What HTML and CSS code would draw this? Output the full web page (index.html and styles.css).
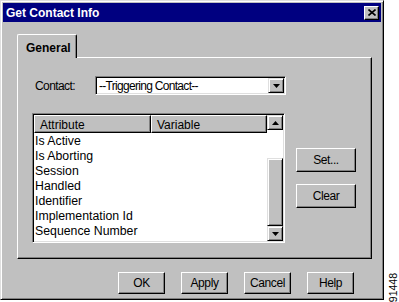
FILE: index.html
```html
<!DOCTYPE html>
<html lang="en">
<head>
    <meta charset="UTF-8">
    <meta name="viewport" content="width=device-width, initial-scale=1.0">
    <title>Get Contact Info</title>
    <link rel="stylesheet" href="styles.css">
</head>
<body>
    <div class="page">
        <div class="dialog">
            <div class="titlebar">
                <span class="title">Get Contact Info</span>
                <button class="close" aria-label="Close">
                    <svg width="8" height="7" viewBox="0 0 8 7">
                        <path d="M0.5 0.5 L7.5 6.5 M7.5 0.5 L0.5 6.5" stroke="#000" stroke-width="1.6" fill="none"/>
                    </svg>
                </button>
            </div>

            <div class="content">
                <div class="tabs">
                    <div class="tab">General</div>
                </div>

                <div class="panel">
                    <div class="contact-row">
                        <label class="label">Contact:</label>
                        <div class="combo">
                            <span class="combo-text">--Triggering Contact--</span>
                            <div class="arrow-btn">
                                <svg width="7" height="4" viewBox="0 0 7 4"><path d="M0 0 H7 L3.5 4 Z" fill="#000"/></svg>
                            </div>
                        </div>
                    </div>

                    <div class="list-row">
                        <div class="listview">
                            <div class="list-main">
                                <div class="list-head">
                                    <div class="col col-attr">Attribute</div>
                                    <div class="col col-var">Variable</div>
                                </div>
                                <ul class="items">
                                    <li>Is Active</li>
                                    <li>Is Aborting</li>
                                    <li>Session</li>
                                    <li>Handled</li>
                                    <li>Identifier</li>
                                    <li>Implementation Id</li>
                                    <li>Sequence Number</li>
                                </ul>
                            </div>
                            <div class="scrollbar">
                                <div class="arrow-btn">
                                    <svg width="7" height="4" viewBox="0 0 7 4"><path d="M0 4 H7 L3.5 0 Z" fill="#000"/></svg>
                                </div>
                                <div class="track">
                                    <div class="thumb"></div>
                                </div>
                                <div class="arrow-btn">
                                    <svg width="7" height="4" viewBox="0 0 7 4"><path d="M0 0 H7 L3.5 4 Z" fill="#000"/></svg>
                                </div>
                            </div>
                        </div>

                        <div class="side-buttons">
                            <button class="btn btn-side">Set...</button>
                            <button class="btn btn-side">Clear</button>
                        </div>
                    </div>
                </div>

                <div class="actions">
                    <button class="btn">OK</button>
                    <button class="btn">Apply</button>
                    <button class="btn">Cancel</button>
                    <button class="btn">Help</button>
                </div>
            </div>
        </div>
        <div class="figure-id">91448</div>
    </div>
</body>
</html>
```

FILE: styles.css
```css
body {
    margin: 0;
    background-color: #fff;
    font-family: "Liberation Sans", Arial, sans-serif;
    font-size: 12px;
    color: #000;
}
.page {
    display: flex;
    align-items: flex-end;
    width: 399px;
    height: 302px;
}
.dialog {
    box-sizing: border-box;
    width: 386px;
    height: 300px;
    align-self: flex-start;
    background-color: #c0c0c0;
    border: 1px solid;
    border-color: #dfdfdf #000 #000 #dfdfdf;
    box-shadow: inset 1px 1px #fff, inset -1px -1px #808080;
    padding: 2px;
    display: flex;
    flex-direction: column;
}
.titlebar {
    height: 19px;
    background-color: #000080;
    display: flex;
    align-items: center;
    justify-content: space-between;
    padding: 0 2px 0 3px;
}
.title {
    color: #fff;
    font-weight: bold;
    font-size: 12px;
}
.close {
    box-sizing: border-box;
    width: 15px;
    height: 14px;
    padding: 0;
    background-color: #c0c0c0;
    border: 1px solid;
    border-color: #fff #000 #000 #fff;
    box-shadow: inset -1px -1px #808080;
    display: flex;
    align-items: center;
    justify-content: center;
}
.content {
    display: flex;
    flex-direction: column;
    padding: 12px 0 0 14px;
}
.tabs {
    display: flex;
    position: relative;
    z-index: 1;
    margin-bottom: -1px;
}
.tab {
    box-sizing: border-box;
    width: 60px;
    height: 24px;
    font-weight: bold;
    padding: 6px 0 0 8px;
    background-color: #c0c0c0;
    border: 1px solid #fff;
    border-right: 1px solid #000;
    border-bottom: none;
    border-radius: 2px 2px 0 0;
    box-shadow: inset -1px 0 #808080;
}
.panel {
    box-sizing: border-box;
    width: 355px;
    height: 202px;
    border: 1px solid;
    border-color: #fff #000 #000 #fff;
    box-shadow: inset -1px -1px #808080;
    padding: 18px 0 0 14px;
}
.contact-row {
    display: flex;
    align-items: center;
}
.label {
    width: 60px;
    padding-left: 3px;
    letter-spacing: -0.6px;
}
.combo {
    box-sizing: border-box;
    width: 191px;
    height: 19px;
    background-color: #fff;
    border: 1px solid;
    border-color: #808080 #fff #fff #808080;
    box-shadow: inset 1px 1px #000, inset -1px -1px #dfdfdf;
    display: flex;
    align-items: center;
    justify-content: space-between;
    padding: 1px;
}
.combo-text {
    padding-left: 2px;
    letter-spacing: -0.7px;
}
.arrow-btn {
    box-sizing: border-box;
    width: 16px;
    height: 15px;
    background-color: #c0c0c0;
    border: 1px solid;
    border-color: #dfdfdf #000 #000 #dfdfdf;
    box-shadow: inset 1px 1px #fff, inset -1px -1px #808080;
    display: flex;
    align-items: center;
    justify-content: center;
}
.list-row {
    display: flex;
    margin-top: 18px;
}
.listview {
    box-sizing: border-box;
    width: 253px;
    height: 130px;
    display: flex;
    background-color: #fff;
    border: 1px solid;
    border-color: #808080 #fff #fff #808080;
    box-shadow: inset 1px 1px #000, inset -1px -1px #dfdfdf;
    padding: 1px;
}
.list-main {
    flex: 1;
    display: flex;
    flex-direction: column;
}
.list-head {
    display: flex;
    height: 18px;
}
.col {
    box-sizing: border-box;
    height: 18px;
    background-color: #c0c0c0;
    border: 1px solid;
    border-color: #fff #000 #000 #fff;
    box-shadow: inset -1px -1px #808080;
    padding: 2px 0 0 5px;
}
.col-attr {
    width: 117px;
}
.col-var {
    flex: 1;
}
.items {
    list-style: none;
    margin: 0;
    padding: 1px 0 0 1px;
}
.items li {
    height: 15px;
    line-height: 15px;
    font-size: 12.3px;
}
.scrollbar {
    width: 16px;
    display: flex;
    flex-direction: column;
}
.track {
    flex: 1;
    background-color: #fff;
    padding-top: 28px;
}
.thumb {
    box-sizing: border-box;
    height: 68px;
    background-color: #c0c0c0;
    border: 1px solid;
    border-color: #dfdfdf #000 #000 #dfdfdf;
    box-shadow: inset 1px 1px #fff, inset -1px -1px #808080;
}
.scrollbar .arrow-btn {
    height: 16px;
}
.side-buttons {
    display: flex;
    flex-direction: column;
    gap: 12px;
    margin: 35px 0 0 11px;
}
.btn {
    box-sizing: border-box;
    width: 47px;
    height: 22px;
    padding: 0;
    background-color: #c0c0c0;
    font-family: "Liberation Sans", Arial, sans-serif;
    font-size: 12px;
    letter-spacing: -0.4px;
    color: #000;
    border: 1px solid;
    border-color: #fff #000 #000 #fff;
    box-shadow: inset -1px -1px #808080;
}
.btn-side {
    width: 60px;
    height: 24px;
}
.actions {
    display: flex;
    justify-content: flex-end;
    gap: 16px;
    margin-top: 13px;
    padding-right: 27px;
}
.figure-id {
    writing-mode: vertical-rl;
    transform: rotate(180deg);
    font-size: 10.5px;
    margin: 0 0 0 3px;
}
```
